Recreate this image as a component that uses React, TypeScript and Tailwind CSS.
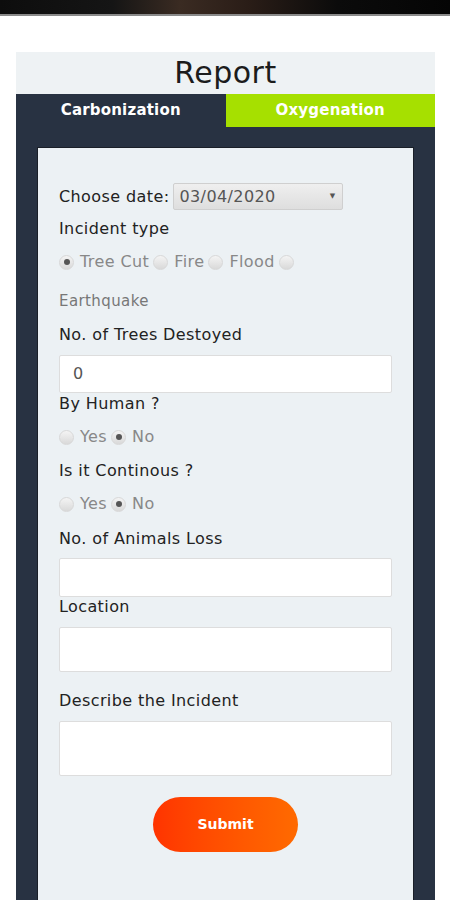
import React from 'react';

const font = { fontFamily: '"DejaVu Sans", "Liberation Sans", sans-serif' };

function Radio({ checked }: { checked?: boolean }) {
  return (
    <span className="inline-flex h-[15px] w-[15px] shrink-0 items-center justify-center rounded-full border border-[#d8d8d8] bg-gradient-to-b from-[#f4f4f4] to-[#d9d9d9]">
      {checked && <span className="h-[6px] w-[6px] rounded-full bg-[#555]" />}
    </span>
  );
}

function RadioItem({ label, checked }: { label?: string; checked?: boolean }) {
  return (
    <span className="inline-flex items-center gap-[6px]">
      <Radio checked={checked} />
      {label && <span>{label}</span>}
    </span>
  );
}

export default function App() {
  return (
    <div className="min-h-[900px] w-[450px] overflow-hidden bg-white" style={font}>
      {/* top image strip */}
      <div className="h-[14px] bg-[linear-gradient(90deg,#0d0d0d_0%,#151515_25%,#3a2b22_40%,#2a1d17_55%,#0b0b0b_75%,#050505_100%)]" />
      <div className="h-[2px] bg-[#8a8a8a]" />

      <div className="ml-[16px] mr-[15px] mt-[36px]">
        {/* header */}
        <div className="flex h-[42px] items-center justify-center bg-[#eef2f4]">
          <span className="text-[30px] leading-none tracking-[0.5px] text-[#1c1c1c]">Report</span>
        </div>

        {/* tabs */}
        <div className="flex h-[33px]">
          <div className="flex flex-1 items-center justify-center bg-[#283242] text-[15px] font-bold tracking-[0.2px] text-white">
            Carbonization
          </div>
          <div className="flex flex-1 items-center justify-center bg-[#a6e000] text-[15px] font-bold tracking-[0.2px] text-white">
            Oxygenation
          </div>
        </div>

        {/* dark frame */}
        <div className="bg-[#283242] px-[21px] pt-[20px]">
          <div className="border border-[#1a1f28] bg-[#ecf1f4] px-[21px] pb-[80px] pt-[35px] text-[16px] tracking-[0.4px] text-[#222]">
            <div className="flex h-[27px] items-center">
              <span className="mr-[4px] leading-5">Choose date:</span>
              <div className="flex h-[27px] w-[170px] items-center justify-between rounded-[2px] border border-[#cfcfcf] bg-gradient-to-b from-[#efefef] to-[#dedede] pl-[5px] pr-[7px] text-[#555]">
                <span>03/04/2020</span>
                <span className="text-[7px]">▼</span>
              </div>
            </div>

            <div className="mt-[9px] leading-5">Incident type</div>
            <div className="mt-[13px] flex items-center gap-[4px] leading-5 text-[#888]">
              <RadioItem label="Tree Cut" checked />
              <RadioItem label="Fire" />
              <RadioItem label="Flood" />
              <RadioItem />
            </div>
            <div className="mt-[19px] text-[15px] leading-5 text-[#777]">Earthquake</div>

            <div className="mt-[14px] leading-5">No. of Trees Destoyed</div>
            <div className="mt-[10px] flex h-[38px] items-center rounded-[2px] border border-[#dddddd] bg-white pl-[13px] text-[#555]">
              0
            </div>

            <div className="mt-[1px] leading-5">By Human ?</div>
            <div className="mt-[13px] flex items-center gap-[4px] leading-5 text-[#888]">
              <RadioItem label="Yes" />
              <RadioItem label="No" checked />
            </div>

            <div className="mt-[14px] leading-5">Is it Continous ?</div>
            <div className="mt-[13px] flex items-center gap-[4px] leading-5 text-[#888]">
              <RadioItem label="Yes" />
              <RadioItem label="No" checked />
            </div>

            <div className="mt-[15px] leading-5">No. of Animals Loss</div>
            <div className="mt-[9px] h-[39px] rounded-[2px] border border-[#dddddd] bg-white" />

            <div className="leading-5">Location</div>
            <div className="mt-[10px] h-[45px] rounded-[2px] border border-[#dddddd] bg-white" />

            <div className="mt-[19px] leading-5">Describe the Incident</div>
            <div className="mt-[10px] h-[55px] rounded-[2px] border border-[#dddddd] bg-white" />

            <div className="mt-[21px] flex justify-center">
              <button className="h-[55px] w-[145px] rounded-full bg-gradient-to-r from-[#ff3300] to-[#ff6a00] text-[14px] font-bold tracking-normal text-white">
                Submit
              </button>
            </div>
          </div>
        </div>
      </div>
    </div>
  );
}
